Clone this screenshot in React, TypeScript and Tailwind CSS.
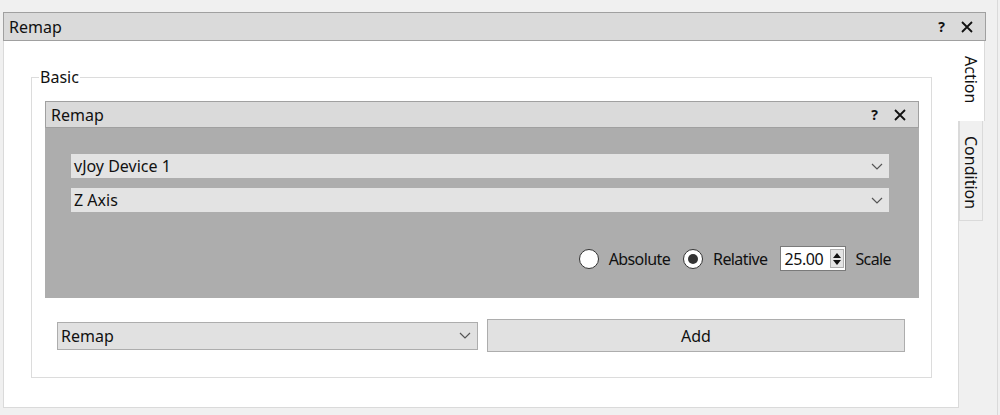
import React from "react";

function CloseIcon({ size = 12 }: { size?: number }) {
  return (
    <svg width={size} height={size} viewBox="0 0 12 12" fill="none">
      <path d="M1 1L11 11M11 1L1 11" stroke="#111" strokeWidth="1.8" />
    </svg>
  );
}

function Chevron() {
  return (
    <svg width="12" height="7" viewBox="0 0 12 7" fill="none">
      <path d="M1 1L6 6L11 1" stroke="#555" strokeWidth="1.2" />
    </svg>
  );
}

function TitleButtons() {
  return (
    <div className="flex items-center gap-[16px] pr-[12px]">
      <span className="text-[14px] font-bold text-[#111]">?</span>
      <CloseIcon />
    </div>
  );
}

function Combo({ label, className }: { label: string; className: string }) {
  return (
    <div className={`flex items-center justify-between pl-[3px] pr-[6px] ${className}`}>
      <span>{label}</span>
      <Chevron />
    </div>
  );
}

function Radio({ checked, label }: { checked?: boolean; label: string }) {
  return (
    <label className="flex items-center gap-[10px]">
      <span className="flex h-[20px] w-[20px] items-center justify-center rounded-full border border-[#333] bg-white">
        {checked && <span className="h-[10px] w-[10px] rounded-full bg-[#333]" />}
      </span>
      <span className="tracking-[-0.6px]">{label}</span>
    </label>
  );
}

export default function App() {
  return (
    <div
      className="flex h-[415px] w-[1000px] overflow-hidden bg-[#f0f0f0] text-[16px] text-[#111]"
      style={{ fontFamily: '"Noto Sans", "Segoe UI", sans-serif' }}
    >
      <div className="h-full w-[998px] border-r border-[#dadada] pl-[3px] pt-[12px]">
        <div className="flex h-[29px] w-[983px] items-center justify-between border border-[#a0a0a0] bg-[#dadada]">
          <span className="pl-[5px]">Remap</span>
          <TitleButtons />
        </div>

        <div className="flex">
          <div className="h-[367px] w-[956px] border-x border-b border-[#dadada] bg-white pl-[27px] pt-[36px]">
            <div className="relative h-[301px] w-[901px] border border-[#dcdcdc] pl-[13px] pt-[23px]">
              <span className="absolute -top-[12px] left-[7px] bg-white px-[1px] leading-[22px]">Basic</span>

              <div className="w-[874px]">
                <div className="flex h-[27px] items-center justify-between border border-[#a0a0a0] bg-[#dadada]">
                  <span className="pl-[5px]">Remap</span>
                  <TitleButtons />
                </div>
                <div className="h-[170px] bg-[#adadad] pl-[26px] pt-[26px]">
                  <Combo label="vJoy Device 1" className="h-[24px] w-[818px] bg-[#e3e3e3]" />
                  <Combo label="Z Axis" className="mt-[10px] h-[24px] w-[818px] bg-[#e3e3e3]" />
                  <div className="mt-[34px] flex w-[820px] items-center justify-end gap-[13px]">
                    <Radio label="Absolute" />
                    <Radio checked label="Relative" />
                    <div className="flex h-[25px] w-[66px] items-center border border-[#7a7a7a] bg-white pl-[3px]">
                      <span className="flex-1 tracking-[-0.4px]">25.00</span>
                      <div className="mr-[1px] flex h-[19px] w-[14px] flex-col items-center justify-center gap-[2px] border border-[#b0b0b0] bg-[#e5e5e5]">
                        <svg width="8" height="5" viewBox="0 0 8 5">
                          <path d="M0 5L4 0L8 5Z" fill="#111" />
                        </svg>
                        <svg width="8" height="5" viewBox="0 0 8 5">
                          <path d="M0 0L4 5L8 0Z" fill="#111" />
                        </svg>
                      </div>
                    </div>
                    <span className="-ml-[4px] tracking-[-0.6px]">Scale</span>
                  </div>
                </div>
              </div>

              <div className="mt-[21px] flex h-[33px] items-center pl-[12px]">
                <Combo label="Remap" className="h-[28px] w-[421px] border border-[#adadad] bg-[#e1e1e1]" />
                <button className="ml-[9px] h-[33px] w-[418px] border border-[#adadad] bg-[#e1e1e1]">Add</button>
              </div>
            </div>
          </div>

          <div className="-ml-px flex flex-col">
            <div className="h-[80px] w-[27px] border-r border-[#dadada] bg-white pt-[15px]">
              <span className="block pl-[1px] leading-[24px] [writing-mode:vertical-rl]">Action</span>
            </div>
            <div className="ml-px h-[100px] w-[24px] border-x border-b border-[#dadada] bg-[#f0f0f0] pt-[15px]">
              <span className="block leading-[22px] [writing-mode:vertical-rl]">Condition</span>
            </div>
          </div>
        </div>
      </div>
    </div>
  );
}
